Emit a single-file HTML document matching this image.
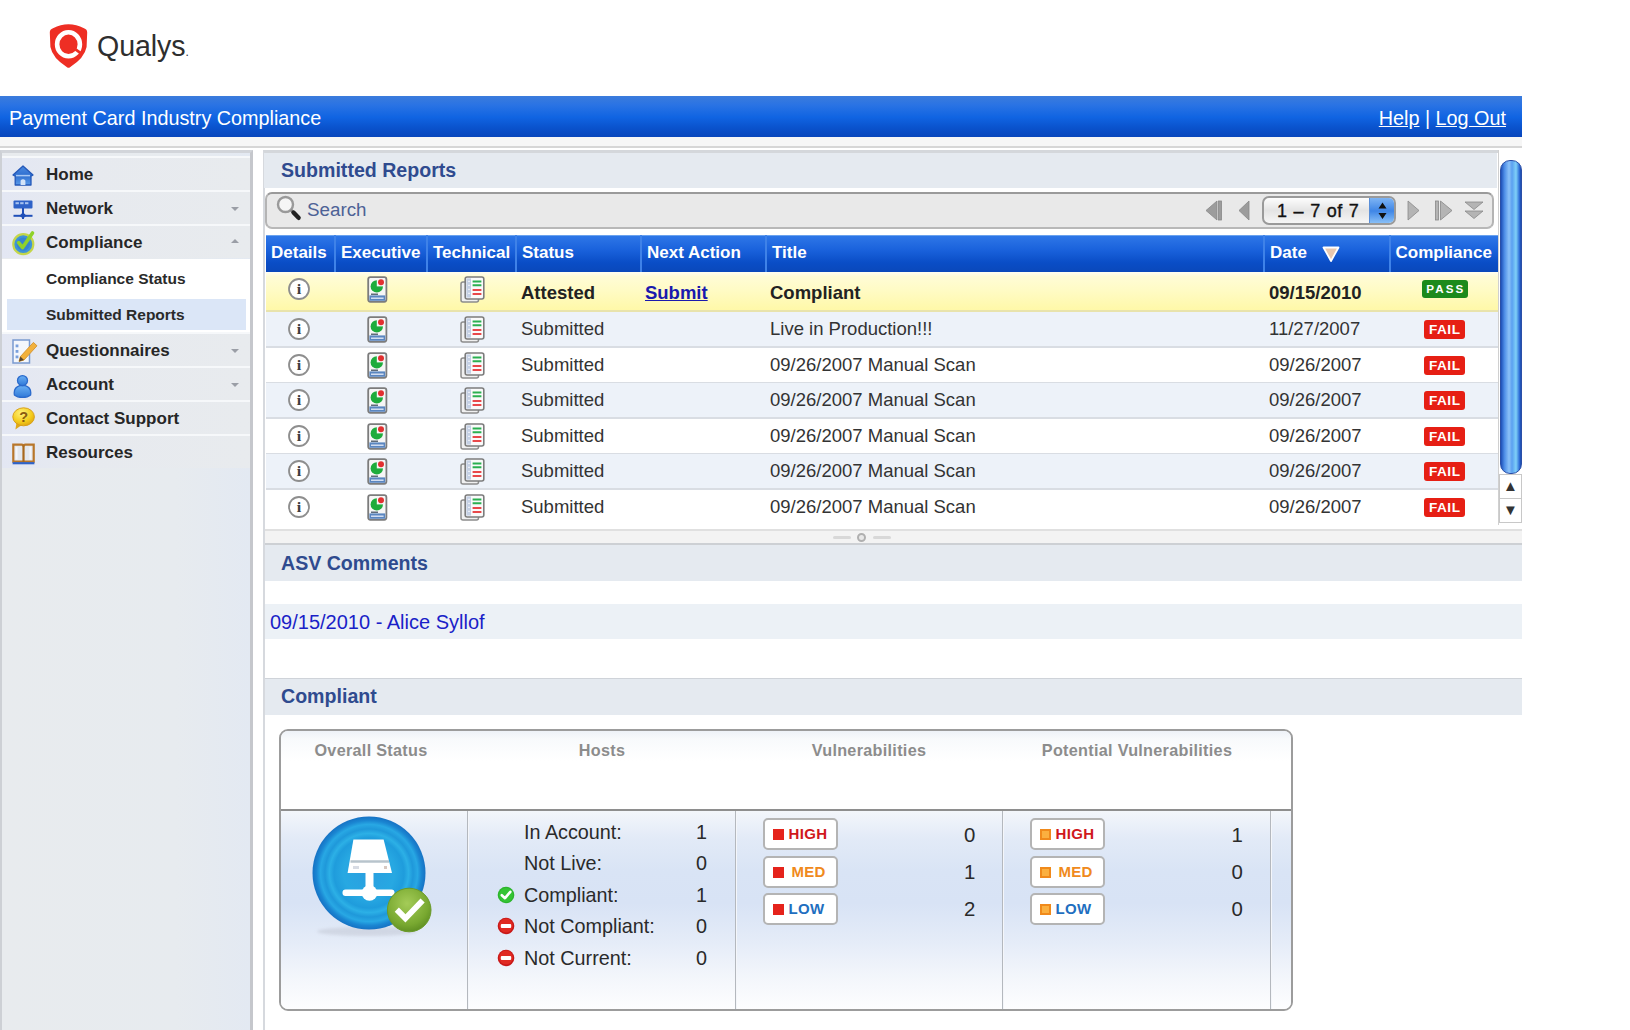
<!DOCTYPE html>
<html>
<head>
<meta charset="utf-8">
<title>Payment Card Industry Compliance</title>
<style>
*{box-sizing:border-box;margin:0;padding:0}
html,body{width:1630px;height:1030px;overflow:hidden;background:#fff;font-family:"Liberation Sans",sans-serif;color:#222}
#page{position:absolute;left:0;top:0;width:1522px;height:1030px;overflow:hidden;background:#fff}
#logo{position:absolute;left:48px;top:22px}
#logotxt{position:absolute;left:97px;top:27px;font-size:28.6px;color:#2e2e2e;letter-spacing:-0.1px;line-height:38px}
#bar{position:absolute;left:0;top:96px;width:1522px;height:41.4px;background:linear-gradient(#3b7cdc 0%,#2a73e4 22%,#1064e2 52%,#0a52cc 78%,#0846bc 100%);color:#fff;font-size:19.8px;line-height:44px}
#bar .t{position:absolute;left:9px;top:0}
#bar .r{position:absolute;right:16px;top:0}
#gap{position:absolute;left:0;top:137.4px;width:1522px;height:10.2px;background:#f6f6f6;border-bottom:2px solid #d6d6d6}
#side{position:absolute;left:0;top:150.4px;width:253px;height:880px;background:linear-gradient(90deg,#e8ebee 0%,#e7ebef 70%,#e3e9f2 100%);border-left:2px solid #cdd0d5;border-right:3px solid #c5c7cc;border-top:3px solid #d2d5da}
#sidei{position:absolute;left:0;top:-1.4px;width:248px;height:800px}
.nav{position:absolute;left:0;width:248px;height:34px;background:linear-gradient(90deg,#e3e7f3 0%,#e7eaef 35%,#e8ebee 100%);border-top:2px solid #f6f8fa;font-weight:bold;font-size:17px;color:#262626;line-height:34px}
.nav span{position:absolute;left:44px;top:0px}
.nav svg{position:absolute}
.nav i{position:absolute;left:229px;top:15px;width:0;height:0;border-left:4.5px solid transparent;border-right:4.5px solid transparent;border-top:4.5px solid #9a9ea6}
.nav i.up{border-top:none;border-bottom:4.5px solid #9a9ea6;top:13px}
#subc{position:absolute;left:0;top:107px;width:248px;height:75px;background:#fff}
.sub{position:absolute;left:5px;width:239px;height:31px;font-weight:bold;font-size:15.5px;color:#2a2a2a;line-height:31px}
.sub span{position:absolute;left:39px;top:0}
.sub.sel{background:#dbe6f7}
#main{position:absolute;left:262.6px;top:150.4px;width:1259.4px;height:880px;background:#fff;border-left:2px solid #d6d9de;border-top:3px solid #d4d7db}
#maini{position:absolute;left:0.4px;top:-3.4px;width:1257px;height:880px}
.hdr{position:absolute;left:0;width:1257px;height:36px;background:#e5eaf0;color:#2f4b8f;font-weight:bold;font-size:19.6px;line-height:37px;padding-left:16px}
#search{position:absolute;left:0px;top:42px;width:1229px;height:37px;border:2px solid #b4b4b4;border-top-color:#9a9a9a;border-bottom-color:#b8b8b8;border-radius:7px;background:#e9e9e9}
#search span{position:absolute;left:40px;top:0;line-height:31px;font-size:18.8px;color:#4d6296}
#thead{position:absolute;left:1px;top:85px;box-shadow:inset 0 1px 0 #6aa2ee;width:1232px;height:37px;background:linear-gradient(#2f78e8 0%,#1a62dc 40%,#0a4dc6 75%,#0a48ba 100%)}
#thead div{position:absolute;top:0;height:37px;line-height:36px;color:#fff;font-weight:bold;font-size:17px;border-left:2px solid #3f82e8;padding-left:5px;white-space:nowrap}
.row{position:absolute;left:1px;width:1232px;height:36px;font-size:18.5px;color:#333;border-bottom:2px solid #d9dde3;line-height:34px}
.row.odd{background:#edf2f9}
.row.last{border-bottom:none}
.row.hl{background:linear-gradient(#fffef2 0,#fffcd6 12%,#fffbc4 50%,#fff8a8 100%);font-weight:bold;color:#222;border-bottom:2px solid #e8e3ac;height:40px;line-height:41px}
.row span{position:absolute;top:0;white-space:nowrap}
.row svg{position:absolute}
.row a{color:#1a1aae;text-decoration:underline}
.badge{position:absolute;left:1158px;top:8px;width:41px;height:18.6px;border-radius:3px;color:#fff;font-weight:bold;font-size:13.6px;line-height:19px;text-align:center;letter-spacing:0.5px;text-indent:0.5px;background:#e61f14}
.badge.p{background:#1c8a1c;left:1155.6px;width:46.6px;top:8px;height:18.4px;font-size:11.6px;letter-spacing:2.1px;text-indent:2px;line-height:18.6px}

#sb{position:absolute;left:1233px;top:0;width:24px;height:375px;background:#fff;border-left:1px solid #d0d0d0}
#sb .thumb{position:absolute;left:1px;top:10px;width:22px;height:314px;border-radius:10px;background:linear-gradient(90deg,#1e50b8 0%,#4f8fe8 18%,#8cc2f8 40%,#5aa0f0 55%,#7fd0f8 75%,#2f6fd8 92%,#1c48a8 100%);border:1px solid #2a4fa8}
#sb .btn{position:absolute;left:0;width:23px;height:25px;border:1px solid #c8c8c8;background:#fff;font-size:15px;line-height:22px;text-align:center;color:#333}
#pager{position:absolute;left:936px;top:3px;height:30px}
#sel{position:absolute;left:995px;top:2px;width:134px;height:29px;border:2px solid #9a9a9a;border-radius:7px;background:linear-gradient(#fdfdfd,#e4e4e4 50%,#f6f6f6);font-size:17px;line-height:24px;color:#111;overflow:hidden}
#search #sel span{position:absolute;left:13px;top:0;letter-spacing:0.3px;color:#111;font-size:18px;line-height:26px;-webkit-text-stroke:0.35px #111;word-spacing:1px}
#sel b{position:absolute;right:0;top:0;width:25px;height:26px;background:linear-gradient(#7eb4f4,#3f86e6 50%,#8ec4f8);border-left:1px solid #5a8fd8}
#div1{position:absolute;left:0;top:379px;width:1257px;height:16px;background:#f3f3f3;border-top:2px solid #e0e0e0;border-bottom:2px solid #cdd0d4}
#div1 i{position:absolute;left:592px;top:1.5px;width:9px;height:9px;border-radius:5px;border:2px solid #b0b0b0;background:#e8e8e8}
#div1 b{position:absolute;top:5px;height:3px;width:18px;background:#d8d8d8;border-radius:2px}
#crow{position:absolute;left:0;top:454px;width:1257px;height:35px;background:#ecf1f6;font-size:20px;line-height:36px;color:#1a1fc8;padding-left:5px}
#box{position:absolute;left:14px;top:579px;width:1014px;height:282px;border:2px solid #9c9c9c;border-radius:9px;background:#fff;overflow:hidden}
#box .top{position:absolute;left:0;top:0;width:100%;height:80px;border-bottom:2px solid #8e8e8e;background:linear-gradient(#eef2f8 0,#f8fafc 8px,#fff 30px)}
#box .top span{position:absolute;top:9.2px;font-weight:bold;font-size:16.2px;color:#8c8c8c;line-height:20px;text-align:center;transform:translateX(-50%);white-space:nowrap;letter-spacing:0.3px}
#box .body{position:absolute;left:0;top:80px;width:100%;height:200px;background:linear-gradient(#f3f6fb 0%,#e2eaf7 14%,#d9e4f5 30%,#d8e3f5 46%,#e5ecf8 66%,#f3f6fb 83%,#fefeff 100%)}
#box .vl{position:absolute;top:0;width:2px;height:200px;background:#b4b8be;border-right:1px solid #f4f6fa}
.hl2{position:absolute;font-size:19.8px;color:#2a2a2a;line-height:24px;white-space:nowrap}
.sev{position:absolute;width:75px;height:32px;border:2px solid #b4b4b4;border-radius:5px;background:#fff;font-weight:bold;font-size:15px;line-height:28.5px}
.sev i{position:absolute;left:8px;top:9px;width:11px;height:11px;background:#e5231b}
.sev i.o{background:#fbb040;border:2px solid #f08a1c}
.sev span{position:absolute;left:23.6px;top:0;letter-spacing:0.3px}
</style>
</head>
<body>
<div id="page">
<svg id="logo" width="42" height="48" viewBox="0 0 42 48"><path d="M1.8 10.5 Q1.8 7.2 5 6.2 Q20.5 -1.8 36 6.2 Q39.2 7.2 39.2 10.5 L38.6 25 Q36.5 36 22 45.2 Q20.5 46.2 19 45.2 Q4.5 36 2.4 25 Z" fill="#ee2e24"/><ellipse cx="20.5" cy="22.3" rx="11.4" ry="12" fill="none" stroke="#fff" stroke-width="4.6"/><path d="M27.2 27.2 L33.6 31.8" stroke="#ee2e24" stroke-width="2.8"/></svg>
<div id="logotxt">Qualys<span style="font-size:12px">.</span></div>
<div id="bar"><span class="t">Payment Card Industry Compliance</span><span class="r"><u>Help</u> | <u>Log Out</u></span></div>
<div id="gap"></div>

<div id="side"><div id="sidei">
<div class="nav" style="top:4px"><svg width="22" height="22" viewBox="0 0 22 22" style="left:10px;top:7px"><defs><linearGradient id="gh" x1="0" y1="0" x2="0" y2="1"><stop offset="0" stop-color="#4a8ae0"/><stop offset="0.5" stop-color="#2f6fd0"/><stop offset="1" stop-color="#5a9ae8"/></linearGradient></defs><path d="M11 1 L1 10 L3.2 11.2 V20 H19 V11.2 L21 10 Z" fill="url(#gh)" stroke="#2458b8" stroke-width="1.3" stroke-linejoin="round"/><path d="M4 10.6 H18" stroke="#a8c8f4" stroke-width="1.5"/><path d="M8.6 20 V15.5 Q11 13.2 13.4 15.5 V20 Z" fill="#d4e4f8"/></svg><span>Home</span></div>
<div class="nav" style="top:38px"><svg width="20" height="20" viewBox="0 0 20 20" style="left:11px;top:8px"><rect x="0.5" y="0.5" width="19" height="8" rx="1" fill="#2f63c8"/><rect x="2.5" y="2.2" width="3.4" height="2" fill="#a8c4f0"/><rect x="7.2" y="2.2" width="3.4" height="2" fill="#a8c4f0"/><rect x="12" y="2.2" width="3.4" height="2" fill="#a8c4f0"/><rect x="9" y="8" width="2" height="11" fill="#1f4fb8"/><path d="M0.5 15.8 H19.5" stroke="#1f4fb8" stroke-width="2"/><path d="M6.5 15.8 L10 12.3 L13.5 15.8 L10 18.6 Z" fill="#1f4fb8"/></svg><span>Network</span><i></i></div>
<div class="nav" style="top:72px"><svg width="28" height="30" viewBox="0 0 28 30" style="left:8px;top:2px"><circle cx="13.3" cy="16.2" r="10" fill="#3e93d8" stroke="#c4d64a" stroke-width="2.2"/><circle cx="13.3" cy="16.2" r="6.6" fill="#3584d0"/><path d="M8.6 14.6 L12.6 19.6 L22.5 5" fill="none" stroke="#8fd22a" stroke-width="3.6" stroke-linejoin="round" stroke-linecap="round"/></svg><span>Compliance</span><i class="up"></i></div>
<div id="subc"></div>
<div class="sub" style="top:111px"><span>Compliance Status</span></div>
<div class="sub sel" style="top:147px"><span>Submitted Reports</span></div>
<div class="nav" style="top:180px"><svg width="26" height="26" viewBox="0 0 26 26" style="left:10px;top:5px"><rect x="1" y="1" width="16.5" height="23" fill="#f4f7fc" stroke="#7a9ad0" stroke-width="1.5"/><rect x="3.6" y="5.5" width="2.8" height="2.8" fill="#7aa0dc"/><rect x="3.6" y="11" width="2.8" height="2.8" fill="#7aa0dc"/><rect x="3.6" y="16.5" width="2.8" height="2.8" fill="#7aa0dc"/><path d="M8.4 17.6 L21.4 3.4 L25 6.8 L12 21 L7 22.4 Z" fill="#f2b13c" stroke="#d4922c" stroke-width="0.9"/><path d="M8.4 17.6 L12 21 L7 22.4 Z" fill="#5a4630"/></svg><span>Questionnaires</span><i></i></div>
<div class="nav" style="top:214px"><svg width="19" height="25" viewBox="0 0 19 25" style="left:11px;top:6px"><defs><linearGradient id="ga" x1="0" y1="0" x2="0" y2="1"><stop offset="0" stop-color="#6ab0f4"/><stop offset="1" stop-color="#2f78d8"/></linearGradient></defs><path d="M1.4 21 C0.4 14.5 4 12.4 6.8 11.6 H12.2 C15 12.4 18.6 14.5 17.6 21 C14 24.2 5 24.2 1.4 21Z" fill="url(#ga)" stroke="#2a6acc" stroke-width="1.3"/><circle cx="9.5" cy="6.6" r="5" fill="url(#ga)" stroke="#2a6acc" stroke-width="1.3"/></svg><span>Account</span><i></i></div>
<div class="nav" style="top:248px"><svg width="24" height="24" viewBox="0 0 24 24" style="left:10px;top:5px"><defs><radialGradient id="gs" cx="0.4" cy="0.3" r="0.8"><stop offset="0" stop-color="#fff27a"/><stop offset="0.6" stop-color="#f4cc1c"/><stop offset="1" stop-color="#d89c10"/></radialGradient></defs><path d="M4.5 15.5 L3.4 22.6 L10.5 17.5 Z" fill="#e0a818"/><ellipse cx="11.6" cy="9.8" rx="10.8" ry="9" fill="url(#gs)" stroke="#d8a018" stroke-width="1"/><text x="11.6" y="15" text-anchor="middle" font-family="Liberation Sans,sans-serif" font-weight="bold" font-size="14.5" fill="#8a5a10">?</text></svg><span>Contact Support</span></div>
<div class="nav" style="top:282px"><svg width="24" height="22" viewBox="0 0 24 22" style="left:10px;top:7px"><path d="M1.3 1.6 H9.6 Q11.5 1.6 11.5 3.4 Q11.5 1.6 13.4 1.6 H21.7 V18.6 H1.3 Z" fill="#e4e8ee" stroke="#b8762a" stroke-width="2.2"/><path d="M11.5 2.4 V19" stroke="#a8681c" stroke-width="2.2"/><path d="M0.6 20.2 H22.4" stroke="#2f63c8" stroke-width="2.2"/><path d="M4.6 4 V16.5 M18.4 4 V16.5" stroke="#f4f6fa" stroke-width="1.8"/></svg><span>Resources</span></div>
</div></div>

<div id="main"><div id="maini">
<div class="hdr" style="top:3px;height:35px;line-height:35px;left:-1px;padding-left:17px;width:1233px">Submitted Reports</div>
<div id="search"><svg width="30" height="30" viewBox="0 0 30 30" style="position:absolute;left:8px;top:0px"><circle cx="10.5" cy="10.5" r="7.5" fill="#f6f6f6" stroke="#9a9a9a" stroke-width="2.4"/><path d="M16 16 L19 19" stroke="#888" stroke-width="3"/><path d="M18.5 18.5 L23.6 23.8" stroke="#222" stroke-width="4.4" stroke-linecap="round"/></svg><svg width="290" height="30" viewBox="0 0 290 30" style="position:absolute;left:935px;top:1.5px"><g fill="#9c9c9c" stroke="#888" stroke-width="0.8"><path d="M15 5 L4 14.5 L15 24 Z"/><rect x="16.5" y="5" width="3" height="19"/><path d="M47 5 L37 14.5 L47 24 Z"/><path d="M206 5 L217 14.5 L206 24 Z" fill="#b4b4b4"/><rect x="233.5" y="5" width="3" height="19" fill="#b4b4b4"/><path d="M238.5 5 L250 14.5 L238.5 24 Z" fill="#b4b4b4"/><path d="M263 6 H281 L272 13.5 Z" fill="#b4b4b4"/><path d="M263 15 H281 L272 22.5 Z" fill="#b4b4b4"/></g></svg><span>Search</span><div id="sel"><span>1 &ndash; 7 of 7</span><b><svg width="27" height="26" viewBox="1 0 27 26"><path d="M13.5 4.5 L17.5 10.5 H9.5 Z M13.5 21 L17.5 15 H9.5 Z" fill="#111"/></svg></b></div></div>
<div id="thead">
<div style="left:0;width:68px;border-left:none">Details</div>
<div style="left:68px;width:92px">Executive</div>
<div style="left:160px;width:89px">Technical</div>
<div style="left:249px;width:125px">Status</div>
<div style="left:374px;width:125px">Next Action</div>
<div style="left:499px;width:498px">Title</div>
<div style="left:997px;width:127px">Date<svg width="18" height="16" viewBox="0 0 18 16" style="position:absolute;left:57px;top:11px"><path d="M1.5 1.5 H16.5 L9 15 Z" fill="#e8c8b0" stroke="#fff" stroke-width="1.8" stroke-linejoin="round"/></svg></div>
<div style="left:1123px;width:109px;padding-left:4.5px">Compliance</div>
</div>
<div class="row hl" style="top:122px"><svg style="left:21px;top:5px" width="24" height="24" viewBox="0 0 24 24"><circle cx="12" cy="12" r="10" fill="#fff" stroke="#8e8e8e" stroke-width="1.8"/><text x="12" y="16.6" text-anchor="middle" font-family="Liberation Serif,serif" font-weight="bold" font-size="14" fill="#3c3c3c" transform="translate(-1.8 0) scale(1.15 1)">i</text></svg><svg style="left:101px;top:4px" width="21" height="28" viewBox="0 0 21 28"><rect x="1.2" y="1.2" width="18.2" height="24.6" rx="2.2" fill="#f6f6f6" stroke="#7c7c7c" stroke-width="1.8"/><rect x="2.4" y="19.4" width="15.8" height="5.4" fill="#5a86c0"/><path d="M4 18.2H11" stroke="#3a4a5a" stroke-width="1.2"/><path d="M4 22.2H16.6" stroke="#e8eef8" stroke-width="1.3"/><circle cx="9.8" cy="10.4" r="6.2" fill="#1eac3c"/><path d="M9.8 10.4 V2.6 H17.6 V10.4 Z" fill="#f6f6f6"/><circle cx="14" cy="6.2" r="3" fill="#e23030"/></svg><svg style="left:194px;top:4px" width="26" height="28" viewBox="0 0 26 28"><rect x="1" y="6" width="17.5" height="20" rx="2" fill="#f0f0f0" stroke="#8c8c8c" stroke-width="1.5"/><rect x="5.2" y="1" width="18.6" height="22" rx="2" fill="#fafafa" stroke="#7c7c7c" stroke-width="1.6"/><rect x="6.4" y="2.4" width="4.6" height="19.2" fill="#c4d0e4"/><path d="M8.2 5.4h1.6M8.2 9.4h1.6M8.2 13.4h1.6M8.2 17.4h1.6" stroke="#f4f6fa" stroke-width="1.2"/><path d="M12.6 5.4H21.4M12.6 9.2H21.4" stroke="#2ab050" stroke-width="2"/><path d="M12.6 14H21.4M12.6 18H21.4" stroke="#e8484a" stroke-width="2.2"/></svg><span style="left:255px">Attested</span><span style="left:379px"><a>Submit</a></span><span style="left:504px">Compliant</span><span style="left:1003px">09/15/2010</span><div class="badge p">PASS</div></div><div class="row odd" style="top:162px"><svg style="left:21px;top:5px" width="24" height="24" viewBox="0 0 24 24"><circle cx="12" cy="12" r="10" fill="#fff" stroke="#8e8e8e" stroke-width="1.8"/><text x="12" y="16.6" text-anchor="middle" font-family="Liberation Serif,serif" font-weight="bold" font-size="14" fill="#3c3c3c" transform="translate(-1.8 0) scale(1.15 1)">i</text></svg><svg style="left:101px;top:4px" width="21" height="28" viewBox="0 0 21 28"><rect x="1.2" y="1.2" width="18.2" height="24.6" rx="2.2" fill="#f6f6f6" stroke="#7c7c7c" stroke-width="1.8"/><rect x="2.4" y="19.4" width="15.8" height="5.4" fill="#5a86c0"/><path d="M4 18.2H11" stroke="#3a4a5a" stroke-width="1.2"/><path d="M4 22.2H16.6" stroke="#e8eef8" stroke-width="1.3"/><circle cx="9.8" cy="10.4" r="6.2" fill="#1eac3c"/><path d="M9.8 10.4 V2.6 H17.6 V10.4 Z" fill="#f6f6f6"/><circle cx="14" cy="6.2" r="3" fill="#e23030"/></svg><svg style="left:194px;top:4px" width="26" height="28" viewBox="0 0 26 28"><rect x="1" y="6" width="17.5" height="20" rx="2" fill="#f0f0f0" stroke="#8c8c8c" stroke-width="1.5"/><rect x="5.2" y="1" width="18.6" height="22" rx="2" fill="#fafafa" stroke="#7c7c7c" stroke-width="1.6"/><rect x="6.4" y="2.4" width="4.6" height="19.2" fill="#c4d0e4"/><path d="M8.2 5.4h1.6M8.2 9.4h1.6M8.2 13.4h1.6M8.2 17.4h1.6" stroke="#f4f6fa" stroke-width="1.2"/><path d="M12.6 5.4H21.4M12.6 9.2H21.4" stroke="#2ab050" stroke-width="2"/><path d="M12.6 14H21.4M12.6 18H21.4" stroke="#e8484a" stroke-width="2.2"/></svg><span style="left:255px">Submitted</span><span style="left:504px">Live in Production!!!</span><span style="left:1003px">11/27/2007</span><div class="badge">FAIL</div></div><div class="row " style="top:198px"><svg style="left:21px;top:5px" width="24" height="24" viewBox="0 0 24 24"><circle cx="12" cy="12" r="10" fill="#fff" stroke="#8e8e8e" stroke-width="1.8"/><text x="12" y="16.6" text-anchor="middle" font-family="Liberation Serif,serif" font-weight="bold" font-size="14" fill="#3c3c3c" transform="translate(-1.8 0) scale(1.15 1)">i</text></svg><svg style="left:101px;top:4px" width="21" height="28" viewBox="0 0 21 28"><rect x="1.2" y="1.2" width="18.2" height="24.6" rx="2.2" fill="#f6f6f6" stroke="#7c7c7c" stroke-width="1.8"/><rect x="2.4" y="19.4" width="15.8" height="5.4" fill="#5a86c0"/><path d="M4 18.2H11" stroke="#3a4a5a" stroke-width="1.2"/><path d="M4 22.2H16.6" stroke="#e8eef8" stroke-width="1.3"/><circle cx="9.8" cy="10.4" r="6.2" fill="#1eac3c"/><path d="M9.8 10.4 V2.6 H17.6 V10.4 Z" fill="#f6f6f6"/><circle cx="14" cy="6.2" r="3" fill="#e23030"/></svg><svg style="left:194px;top:4px" width="26" height="28" viewBox="0 0 26 28"><rect x="1" y="6" width="17.5" height="20" rx="2" fill="#f0f0f0" stroke="#8c8c8c" stroke-width="1.5"/><rect x="5.2" y="1" width="18.6" height="22" rx="2" fill="#fafafa" stroke="#7c7c7c" stroke-width="1.6"/><rect x="6.4" y="2.4" width="4.6" height="19.2" fill="#c4d0e4"/><path d="M8.2 5.4h1.6M8.2 9.4h1.6M8.2 13.4h1.6M8.2 17.4h1.6" stroke="#f4f6fa" stroke-width="1.2"/><path d="M12.6 5.4H21.4M12.6 9.2H21.4" stroke="#2ab050" stroke-width="2"/><path d="M12.6 14H21.4M12.6 18H21.4" stroke="#e8484a" stroke-width="2.2"/></svg><span style="left:255px">Submitted</span><span style="left:504px">09/26/2007 Manual Scan</span><span style="left:1003px">09/26/2007</span><div class="badge">FAIL</div></div><div class="row odd" style="top:233px"><svg style="left:21px;top:5px" width="24" height="24" viewBox="0 0 24 24"><circle cx="12" cy="12" r="10" fill="#fff" stroke="#8e8e8e" stroke-width="1.8"/><text x="12" y="16.6" text-anchor="middle" font-family="Liberation Serif,serif" font-weight="bold" font-size="14" fill="#3c3c3c" transform="translate(-1.8 0) scale(1.15 1)">i</text></svg><svg style="left:101px;top:4px" width="21" height="28" viewBox="0 0 21 28"><rect x="1.2" y="1.2" width="18.2" height="24.6" rx="2.2" fill="#f6f6f6" stroke="#7c7c7c" stroke-width="1.8"/><rect x="2.4" y="19.4" width="15.8" height="5.4" fill="#5a86c0"/><path d="M4 18.2H11" stroke="#3a4a5a" stroke-width="1.2"/><path d="M4 22.2H16.6" stroke="#e8eef8" stroke-width="1.3"/><circle cx="9.8" cy="10.4" r="6.2" fill="#1eac3c"/><path d="M9.8 10.4 V2.6 H17.6 V10.4 Z" fill="#f6f6f6"/><circle cx="14" cy="6.2" r="3" fill="#e23030"/></svg><svg style="left:194px;top:4px" width="26" height="28" viewBox="0 0 26 28"><rect x="1" y="6" width="17.5" height="20" rx="2" fill="#f0f0f0" stroke="#8c8c8c" stroke-width="1.5"/><rect x="5.2" y="1" width="18.6" height="22" rx="2" fill="#fafafa" stroke="#7c7c7c" stroke-width="1.6"/><rect x="6.4" y="2.4" width="4.6" height="19.2" fill="#c4d0e4"/><path d="M8.2 5.4h1.6M8.2 9.4h1.6M8.2 13.4h1.6M8.2 17.4h1.6" stroke="#f4f6fa" stroke-width="1.2"/><path d="M12.6 5.4H21.4M12.6 9.2H21.4" stroke="#2ab050" stroke-width="2"/><path d="M12.6 14H21.4M12.6 18H21.4" stroke="#e8484a" stroke-width="2.2"/></svg><span style="left:255px">Submitted</span><span style="left:504px">09/26/2007 Manual Scan</span><span style="left:1003px">09/26/2007</span><div class="badge">FAIL</div></div><div class="row " style="top:269px"><svg style="left:21px;top:5px" width="24" height="24" viewBox="0 0 24 24"><circle cx="12" cy="12" r="10" fill="#fff" stroke="#8e8e8e" stroke-width="1.8"/><text x="12" y="16.6" text-anchor="middle" font-family="Liberation Serif,serif" font-weight="bold" font-size="14" fill="#3c3c3c" transform="translate(-1.8 0) scale(1.15 1)">i</text></svg><svg style="left:101px;top:4px" width="21" height="28" viewBox="0 0 21 28"><rect x="1.2" y="1.2" width="18.2" height="24.6" rx="2.2" fill="#f6f6f6" stroke="#7c7c7c" stroke-width="1.8"/><rect x="2.4" y="19.4" width="15.8" height="5.4" fill="#5a86c0"/><path d="M4 18.2H11" stroke="#3a4a5a" stroke-width="1.2"/><path d="M4 22.2H16.6" stroke="#e8eef8" stroke-width="1.3"/><circle cx="9.8" cy="10.4" r="6.2" fill="#1eac3c"/><path d="M9.8 10.4 V2.6 H17.6 V10.4 Z" fill="#f6f6f6"/><circle cx="14" cy="6.2" r="3" fill="#e23030"/></svg><svg style="left:194px;top:4px" width="26" height="28" viewBox="0 0 26 28"><rect x="1" y="6" width="17.5" height="20" rx="2" fill="#f0f0f0" stroke="#8c8c8c" stroke-width="1.5"/><rect x="5.2" y="1" width="18.6" height="22" rx="2" fill="#fafafa" stroke="#7c7c7c" stroke-width="1.6"/><rect x="6.4" y="2.4" width="4.6" height="19.2" fill="#c4d0e4"/><path d="M8.2 5.4h1.6M8.2 9.4h1.6M8.2 13.4h1.6M8.2 17.4h1.6" stroke="#f4f6fa" stroke-width="1.2"/><path d="M12.6 5.4H21.4M12.6 9.2H21.4" stroke="#2ab050" stroke-width="2"/><path d="M12.6 14H21.4M12.6 18H21.4" stroke="#e8484a" stroke-width="2.2"/></svg><span style="left:255px">Submitted</span><span style="left:504px">09/26/2007 Manual Scan</span><span style="left:1003px">09/26/2007</span><div class="badge">FAIL</div></div><div class="row odd" style="top:304px"><svg style="left:21px;top:5px" width="24" height="24" viewBox="0 0 24 24"><circle cx="12" cy="12" r="10" fill="#fff" stroke="#8e8e8e" stroke-width="1.8"/><text x="12" y="16.6" text-anchor="middle" font-family="Liberation Serif,serif" font-weight="bold" font-size="14" fill="#3c3c3c" transform="translate(-1.8 0) scale(1.15 1)">i</text></svg><svg style="left:101px;top:4px" width="21" height="28" viewBox="0 0 21 28"><rect x="1.2" y="1.2" width="18.2" height="24.6" rx="2.2" fill="#f6f6f6" stroke="#7c7c7c" stroke-width="1.8"/><rect x="2.4" y="19.4" width="15.8" height="5.4" fill="#5a86c0"/><path d="M4 18.2H11" stroke="#3a4a5a" stroke-width="1.2"/><path d="M4 22.2H16.6" stroke="#e8eef8" stroke-width="1.3"/><circle cx="9.8" cy="10.4" r="6.2" fill="#1eac3c"/><path d="M9.8 10.4 V2.6 H17.6 V10.4 Z" fill="#f6f6f6"/><circle cx="14" cy="6.2" r="3" fill="#e23030"/></svg><svg style="left:194px;top:4px" width="26" height="28" viewBox="0 0 26 28"><rect x="1" y="6" width="17.5" height="20" rx="2" fill="#f0f0f0" stroke="#8c8c8c" stroke-width="1.5"/><rect x="5.2" y="1" width="18.6" height="22" rx="2" fill="#fafafa" stroke="#7c7c7c" stroke-width="1.6"/><rect x="6.4" y="2.4" width="4.6" height="19.2" fill="#c4d0e4"/><path d="M8.2 5.4h1.6M8.2 9.4h1.6M8.2 13.4h1.6M8.2 17.4h1.6" stroke="#f4f6fa" stroke-width="1.2"/><path d="M12.6 5.4H21.4M12.6 9.2H21.4" stroke="#2ab050" stroke-width="2"/><path d="M12.6 14H21.4M12.6 18H21.4" stroke="#e8484a" stroke-width="2.2"/></svg><span style="left:255px">Submitted</span><span style="left:504px">09/26/2007 Manual Scan</span><span style="left:1003px">09/26/2007</span><div class="badge">FAIL</div></div><div class="row  last" style="top:340px"><svg style="left:21px;top:5px" width="24" height="24" viewBox="0 0 24 24"><circle cx="12" cy="12" r="10" fill="#fff" stroke="#8e8e8e" stroke-width="1.8"/><text x="12" y="16.6" text-anchor="middle" font-family="Liberation Serif,serif" font-weight="bold" font-size="14" fill="#3c3c3c" transform="translate(-1.8 0) scale(1.15 1)">i</text></svg><svg style="left:101px;top:4px" width="21" height="28" viewBox="0 0 21 28"><rect x="1.2" y="1.2" width="18.2" height="24.6" rx="2.2" fill="#f6f6f6" stroke="#7c7c7c" stroke-width="1.8"/><rect x="2.4" y="19.4" width="15.8" height="5.4" fill="#5a86c0"/><path d="M4 18.2H11" stroke="#3a4a5a" stroke-width="1.2"/><path d="M4 22.2H16.6" stroke="#e8eef8" stroke-width="1.3"/><circle cx="9.8" cy="10.4" r="6.2" fill="#1eac3c"/><path d="M9.8 10.4 V2.6 H17.6 V10.4 Z" fill="#f6f6f6"/><circle cx="14" cy="6.2" r="3" fill="#e23030"/></svg><svg style="left:194px;top:4px" width="26" height="28" viewBox="0 0 26 28"><rect x="1" y="6" width="17.5" height="20" rx="2" fill="#f0f0f0" stroke="#8c8c8c" stroke-width="1.5"/><rect x="5.2" y="1" width="18.6" height="22" rx="2" fill="#fafafa" stroke="#7c7c7c" stroke-width="1.6"/><rect x="6.4" y="2.4" width="4.6" height="19.2" fill="#c4d0e4"/><path d="M8.2 5.4h1.6M8.2 9.4h1.6M8.2 13.4h1.6M8.2 17.4h1.6" stroke="#f4f6fa" stroke-width="1.2"/><path d="M12.6 5.4H21.4M12.6 9.2H21.4" stroke="#2ab050" stroke-width="2"/><path d="M12.6 14H21.4M12.6 18H21.4" stroke="#e8484a" stroke-width="2.2"/></svg><span style="left:255px">Submitted</span><span style="left:504px">09/26/2007 Manual Scan</span><span style="left:1003px">09/26/2007</span><div class="badge">FAIL</div></div>

<div id="sb"><div class="thumb"></div><div class="btn" style="top:324px">&#9650;</div><div class="btn" style="top:348px">&#9660;</div></div>
<div id="div1"><b style="left:568px"></b><i></i><b style="left:608px"></b></div>
<div class="hdr" style="top:395px">ASV Comments</div>
<div id="crow">09/15/2010 - Alice Syllof</div>
<div class="hdr" style="top:528px;height:36.5px;border-top:1px solid #cfd3d9;line-height:35px">Compliant</div>
<div id="box">
<div class="top"><span style="left:90px">Overall Status</span><span style="left:321px">Hosts</span><span style="left:588px">Vulnerabilities</span><span style="left:856px">Potential Vulnerabilities</span></div>
<div class="body"><svg width="130" height="130" viewBox="0 0 130 130" style="position:absolute;left:25.7px;top:0.6px">
<defs><radialGradient id="gb" cx="0.5" cy="0.5" r="0.5"><stop offset="0" stop-color="#2a9fe0"/><stop offset="0.45" stop-color="#27a8e2"/><stop offset="0.62" stop-color="#1f9cdc"/><stop offset="0.7" stop-color="#2cb0e6"/><stop offset="0.78" stop-color="#1f98da"/><stop offset="0.86" stop-color="#28a8e4"/><stop offset="0.93" stop-color="#1a86d2"/><stop offset="1" stop-color="#1672c4"/></radialGradient>
<filter id="fb" x="-20%" y="-100%" width="140%" height="300%"><feGaussianBlur stdDeviation="1.6"/></filter><radialGradient id="gg" cx="0.45" cy="0.35" r="0.7"><stop offset="0" stop-color="#a4cc58"/><stop offset="0.7" stop-color="#78a830"/><stop offset="1" stop-color="#5a8a20"/></radialGradient></defs>
<ellipse cx="60" cy="119.5" rx="50" ry="4.5" fill="#b8bcc8" opacity="0.4" filter="url(#fb)"/>
<circle cx="62" cy="61" r="56.5" fill="url(#gb)"/>
<path d="M46.4 27.4 H76.6 L85 61 H40.6 Z" fill="#fff"/><path d="M43.5 49.5 H82" stroke="#b8c4cc" stroke-width="2.4"/><rect x="46" y="54" width="6" height="3" fill="#d8dce4"/><rect x="77" y="54" width="3" height="3" fill="#d8c8c0"/>
<rect x="58.5" y="60" width="8" height="20" fill="#fff"/><rect x="35.5" y="77.5" width="52" height="6.4" rx="3" fill="#fff"/><circle cx="62.5" cy="81" r="7.8" fill="#fff"/>
<circle cx="102.2" cy="98" r="21.8" fill="url(#gg)" stroke="#6a9a28" stroke-width="1"/>
<path d="M89.8 97.6 L98.4 106.4 L115.6 88.6" fill="none" stroke="#fff" stroke-width="5.8" stroke-linejoin="miter"/>
</svg><svg width="18" height="18" viewBox="0 0 18 18" style="position:absolute;left:216px;top:75px"><circle cx="9" cy="9" r="8.3" fill="#2cb52c"/><circle cx="9" cy="9" r="7" fill="#35c435"/><path d="M4.8 9.2 L8 12.2 L13.3 5.8" fill="none" stroke="#fff" stroke-width="2.6" stroke-linecap="round" stroke-linejoin="round"/></svg><svg width="18" height="18" viewBox="0 0 18 18" style="position:absolute;left:216px;top:106px"><circle cx="9" cy="9" r="8.3" fill="#c81818"/><circle cx="9" cy="8.6" r="7" fill="#e02a22"/><rect x="3.8" y="7" width="10.4" height="4" rx="1" fill="#fff"/></svg><svg width="18" height="18" viewBox="0 0 18 18" style="position:absolute;left:216px;top:138px"><circle cx="9" cy="9" r="8.3" fill="#c81818"/><circle cx="9" cy="8.6" r="7" fill="#e02a22"/><rect x="3.8" y="7" width="10.4" height="4" rx="1" fill="#fff"/></svg>
<div class="vl" style="left:186px"></div><div class="vl" style="left:454px"></div><div class="vl" style="left:721px"></div><div class="vl" style="left:989px"></div>
<div class="hl2" style="left:243px;top:9px">In Account:</div><div class="hl2" style="left:415px;top:9px">1</div>
<div class="hl2" style="left:243px;top:40px">Not Live:</div><div class="hl2" style="left:415px;top:40px">0</div>
<div class="hl2" style="left:243px;top:72px">Compliant:</div><div class="hl2" style="left:415px;top:72px">1</div>
<div class="hl2" style="left:243px;top:103px">Not Compliant:</div><div class="hl2" style="left:415px;top:103px">0</div>
<div class="hl2" style="left:243px;top:135px">Not Current:</div><div class="hl2" style="left:415px;top:135px">0</div>
<div class="sev" style="left:482px;top:7.4px"><i></i><span style="color:#d0181c">HIGH</span></div><div class="hl2" style="left:683px;top:11.5px;font-size:20.4px">0</div>
<div class="sev" style="left:482px;top:44.8px"><i></i><span style="color:#f08a1c;left:26.4px">MED</span></div><div class="hl2" style="left:683px;top:48.5px;font-size:20.4px">1</div>
<div class="sev" style="left:482px;top:81.6px"><i></i><span style="color:#1f6fc0">LOW</span></div><div class="hl2" style="left:683px;top:85.5px;font-size:20.4px">2</div>
<div class="sev" style="left:749px;top:7.4px"><i class="o"></i><span style="color:#d0181c">HIGH</span></div><div class="hl2" style="left:950.6px;top:11.5px;font-size:20.4px">1</div>
<div class="sev" style="left:749px;top:44.8px"><i class="o"></i><span style="color:#f08a1c;left:26.4px">MED</span></div><div class="hl2" style="left:950.6px;top:48.5px;font-size:20.4px">0</div>
<div class="sev" style="left:749px;top:81.6px"><i class="o"></i><span style="color:#1f6fc0">LOW</span></div><div class="hl2" style="left:950.6px;top:85.5px;font-size:20.4px">0</div>
</div>
</div>
</div></div>
</div>
</body>
</html>
